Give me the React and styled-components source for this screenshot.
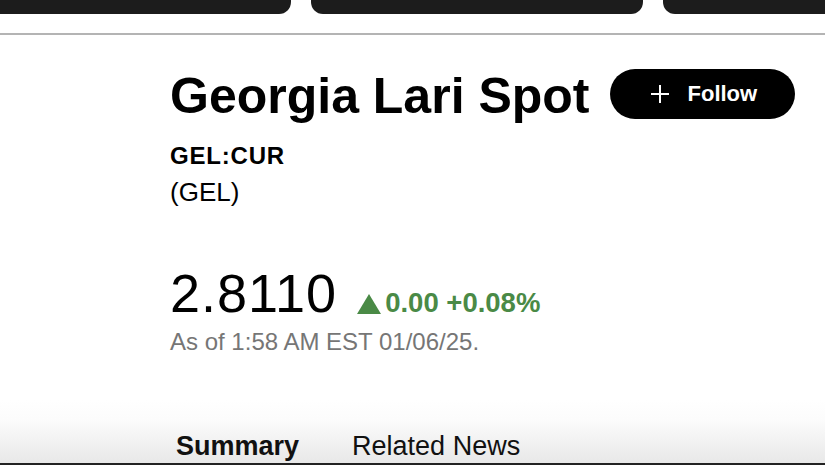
import React from 'react';
import styled, { createGlobalStyle } from 'styled-components';

const GlobalStyle = createGlobalStyle`
  html, body {
    margin: 0;
    padding: 0;
    background: #fff;
  }
  body {
    font-family: "Liberation Sans", Arial, sans-serif;
    color: #000;
  }
`;

const Page = styled.div`
  height: 100vh;
  display: flex;
  flex-direction: column;
  overflow: hidden;
`;

const TopBar = styled.header`
  height: 33px;
  border-bottom: 2px solid #b4b4b4;
  overflow: hidden;
  flex-shrink: 0;
`;

const NavTabs = styled.div`
  display: flex;
  gap: 20px;
  margin-left: -20px;
`;

const NavTab = styled.div`
  flex: 0 0 ${(p) => p.w}px;
  height: 14px;
  background: #1c1c1c;
  border-radius: 0 0 12px 12px;
`;

const Main = styled.main`
  padding: 31px 0 0 170px;
`;

const TitleRow = styled.div`
  display: flex;
  align-items: center;
  gap: 20px;
`;

const Title = styled.h1`
  margin: 0;
  font-size: 50px;
  line-height: 60px;
  font-weight: 700;
  white-space: nowrap;
`;

const FollowButton = styled.button`
  display: flex;
  align-items: center;
  gap: 19px;
  height: 50px;
  padding: 0 38px 0 41px;
  margin-top: -4px;
  border: none;
  border-radius: 25px;
  background: #000;
  color: #fff;
  font-family: inherit;
  font-size: 22px;
  font-weight: 700;
  cursor: pointer;
`;

const Ticker = styled.div`
  margin-top: 12px;
  font-size: 24px;
  line-height: 36px;
  font-weight: 700;
  letter-spacing: 0.8px;
`;

const Currency = styled.div`
  font-size: 26px;
  line-height: 36px;
`;

const PriceRow = styled.div`
  display: flex;
  align-items: baseline;
  gap: 20px;
  margin-top: 53px;
`;

const Price = styled.div`
  font-size: 54px;
  line-height: 60px;
  letter-spacing: 1px;
`;

const Change = styled.div`
  display: flex;
  align-items: baseline;
  gap: 4px;
  color: #4a8a46;
  font-size: 27.5px;
  font-weight: 700;
`;

const Timestamp = styled.div`
  margin-top: 4px;
  font-size: 24px;
  line-height: 30px;
  color: #767676;
`;

const TabStrip = styled.nav`
  margin-top: auto;
  height: 65px;
  box-sizing: border-box;
  display: flex;
  align-items: flex-end;
  gap: 53px;
  padding: 0 0 2px 176px;
  border-bottom: 2px solid #222;
  background: linear-gradient(to bottom, #fff 0%, #fcfcfc 30%, #e8e8e8 100%);
`;

const Tab = styled.div`
  font-size: 27px;
  line-height: 30px;
  font-weight: ${(p) => (p.active ? 700 : 400)};
  color: #111;
`;

const PlusIcon = () => (
  <svg width="18" height="18" viewBox="0 0 18 18">
    <path d="M9 0v18M0 9h18" stroke="#fff" strokeWidth="2" />
  </svg>
);

const UpTriangle = () => (
  <svg width="24" height="20" viewBox="0 0 24 20" style={{ alignSelf: 'center', marginTop: 2 }}>
    <path d="M12 0L24 20H0z" fill="#4a8a46" />
  </svg>
);

const App = () => (
  <Page>
    <GlobalStyle />
    <TopBar>
      <NavTabs>
        <NavTab w={311} />
        <NavTab w={332} />
        <NavTab w={332} />
      </NavTabs>
    </TopBar>
    <Main>
      <TitleRow>
        <Title>Georgia Lari Spot</Title>
        <FollowButton>
          <PlusIcon />
          Follow
        </FollowButton>
      </TitleRow>
      <Ticker>GEL:CUR</Ticker>
      <Currency>(GEL)</Currency>
      <PriceRow>
        <Price>2.8110</Price>
        <Change>
          <UpTriangle />
          0.00 +0.08%
        </Change>
      </PriceRow>
      <Timestamp>As of 1:58 AM EST 01/06/25.</Timestamp>
    </Main>
    <TabStrip>
      <Tab active>Summary</Tab>
      <Tab>Related News</Tab>
    </TabStrip>
  </Page>
);

export default App;
